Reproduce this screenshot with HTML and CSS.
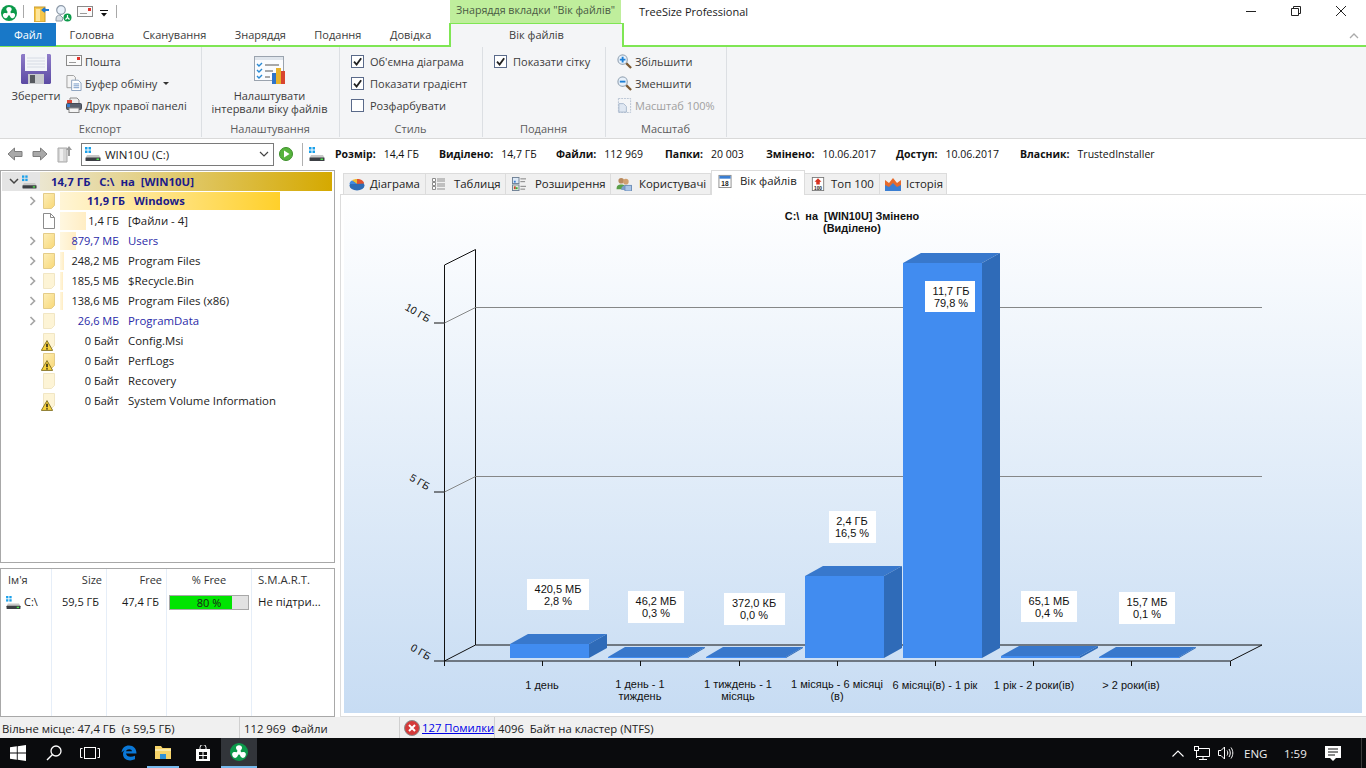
FILE: index.html
```html
<!DOCTYPE html>
<html lang="uk">
<head>
<meta charset="utf-8">
<title>TreeSize Professional</title>
<link rel="stylesheet" href="styles.css">
</head>
<body>
<svg class="defs" width="0" height="0" aria-hidden="true">
  <defs>
    <linearGradient id="gDisk" x1="0" y1="0" x2="0" y2="1"><stop offset="0" stop-color="#8f7cc9"/><stop offset="1" stop-color="#5b4aa3"/></linearGradient>
    <linearGradient id="gFold" x1="0" y1="0" x2="1" y2="1"><stop offset="0" stop-color="#fdeeb8"/><stop offset="1" stop-color="#f8d878"/></linearGradient>
    <symbol id="logo" viewBox="0 0 16 16"><circle cx="8" cy="8" r="8" fill="#0c9a4a"/><g fill="#fff"><circle cx="8" cy="8.500" r="1.900"/><path d="M8 9C6.800 6.800 5.300 5.600 5.300 4.200 5.300 2.800 6.500 2 8 2s2.700.8 2.700 2.200C10.700 5.600 9.200 6.800 8 9z"/><path d="M8 9C6.800 6.800 5.300 5.600 5.300 4.200 5.300 2.800 6.500 2 8 2s2.700.8 2.700 2.200C10.700 5.600 9.200 6.800 8 9z" transform="rotate(120 8 8.500)"/><path d="M8 9C6.800 6.800 5.300 5.600 5.300 4.200 5.300 2.800 6.500 2 8 2s2.700.8 2.700 2.200C10.700 5.600 9.200 6.800 8 9z" transform="rotate(240 8 8.500)"/></g></symbol>
    <symbol id="mail" viewBox="0 0 16 12"><rect x=".5" y=".5" width="15" height="10" fill="#fbfbfb" stroke="#8a8a8a"/><rect x="11" y="2" width="3" height="3" fill="#e0342c"/><path d="M3 7.500h7" stroke="#9a9a9a"/></symbol>
    <symbol id="clip" viewBox="0 0 16 17"><path d="M.5.500h7l2 2v11H.5z" fill="#f4f4f4" stroke="#9c9c9c"/><path d="M5.500 5.500h7l3 3v8h-10z" fill="#fff" stroke="#8aa0bd"/><path d="M7.500 9.500h6M7.500 11.500h6M7.500 13.500h6" stroke="#6f94c4"/></symbol>
    <symbol id="print" viewBox="0 0 16 16"><path d="M4 1h7l2 2v4H4z" fill="#eee" stroke="#8a8a8a"/><rect x=".5" y="6.500" width="15" height="6" rx="1" fill="#59616e" stroke="#454b55"/><rect x="3" y="11" width="10" height="4.500" fill="#f4f4f4" stroke="#888"/><rect x="1" y="3" width="5" height="3" fill="#d8483a"/><rect x="1" y="7" width="3" height="3" fill="#3a7ed2"/></symbol>
    <symbol id="check" viewBox="0 0 12 12"><path d="M2.200 6.200 5 9.300 10 2.400" fill="none" stroke="#222" stroke-width="2"/></symbol>
    <symbol id="zoomin" viewBox="0 0 16 16"><path d="M9.500 9.500 15 15" stroke="#7c5a33" stroke-width="2.400"/><circle cx="6" cy="6" r="5" fill="#e8f1fb" stroke="#9aa9b8" stroke-width="1.300"/><path d="M3 6h6M6 3v6" stroke="#1c7fd6" stroke-width="2"/></symbol>
    <symbol id="zoomout" viewBox="0 0 16 16"><path d="M9.500 9.500 15 15" stroke="#7c5a33" stroke-width="2.400"/><circle cx="6" cy="6" r="5" fill="#e8f1fb" stroke="#9aa9b8" stroke-width="1.300"/><path d="M3 6h6" stroke="#1c7fd6" stroke-width="2"/></symbol>
    <symbol id="zoom100" viewBox="0 0 14 16"><rect x=".5" y=".5" width="13" height="15" fill="none" stroke="#b6c2d2" stroke-dasharray="2 1"/><path d="M1 6h5l3 3v6H1z" fill="#dfe7f2" stroke="#a9b8cc"/></symbol>
    <symbol id="drive" viewBox="0 0 16 14"><g fill="#1aa0ea"><rect x="0" y="0" width="2.500" height="2.500"/><rect x="3.500" y="0" width="2.500" height="2.500"/><rect x="0" y="3.500" width="2.500" height="2.500"/><rect x="3.500" y="3.500" width="2.500" height="2.500"/></g><path d="M2 8h12l1.500 3H.5z" fill="#c8c8c8"/><rect x=".5" y="10.500" width="15" height="3.500" rx=".5" fill="#3c3f44"/><rect x="11.500" y="11.500" width="2.500" height="1.500" fill="#4ee04e"/></symbol>
    <symbol id="folder" viewBox="0 0 12 16"><path d="M.5.500h11v12l-3 3H.5z" fill="url(#gFold)" stroke="#e4cc88"/></symbol>
    <symbol id="folderpale" viewBox="0 0 12 16"><path d="M.5.500h11v12l-3 3H.5z" fill="#fdf4d6" stroke="#f1e6c4"/></symbol>
    <symbol id="file" viewBox="0 0 12 16"><path d="M.5.500h7l4 4v11H.5z" fill="#fff" stroke="#8c8c8c"/><path d="M7.500.5v4h4" fill="none" stroke="#8c8c8c"/></symbol>
    <symbol id="warn" viewBox="0 0 11 10"><path d="M5.500.5 10.700 9.500H.3z" fill="#f7d23e" stroke="#7a6a1e" stroke-width=".8"/><path d="M5.500 3.500v3.200M5.500 7.500v1.100" stroke="#111" stroke-width="1.300"/></symbol>
    <symbol id="chev-r" viewBox="0 0 8 10"><path d="M1.500 1 5.500 5 1.500 9" fill="none" stroke="#a6a6a6" stroke-width="1.700"/></symbol>
  </defs>
</svg>

<div class="app">
  <header class="titlebar">
    <div class="qat">
      <svg class="ic16 logo-ic"><use href="#logo"/></svg>
      <span class="qat-sep"></span>
      <svg class="ic-qat1" viewBox="0 0 16 16"><rect x="0" y="1" width="11" height="15" fill="#f5c64a" stroke="#c79a2c"/><path d="M2 3h4v12H2z" fill="#fde59a"/><path d="M15 4H9M11 2 8.500 4 11 6" fill="none" stroke="#1f78d1" stroke-width="1.800"/></svg>
      <svg class="ic-qat2" viewBox="0 0 17 17"><circle cx="6" cy="5" r="4.300" fill="#eaf2fb" stroke="#8d9aa8" stroke-width="1.200"/><path d="M1 14c0-3 2-4 4-4l3 3-1 3H1z" fill="#d8dde3" stroke="#8d9aa8"/><circle cx="12.500" cy="12.500" r="4" fill="#0c9a4a"/><path d="M12.500 10v2.500l-2 2M12.500 12.500l2 2" stroke="#fff" stroke-width="1.200" fill="none"/></svg>
      <svg class="ic-qat3"><use href="#mail"/></svg>
      <svg class="ic-qat4" viewBox="0 0 8 8"><path d="M0 .5h8" stroke="#111"/><path d="M1 3h6L4 6.500z" fill="#111"/></svg>
      <span class="qat-sep qat-sep-last"></span>
    </div>
    <div class="ctx-title">Знаряддя вкладки "Вік файлів"</div>
    <div class="app-title">TreeSize Professional</div>
    <div class="winctl">
      <svg viewBox="0 0 10 10" class="wc"><path d="M0 5.500h10" stroke="#222"/></svg>
      <svg viewBox="0 0 10 10" class="wc"><path d="M.5 2.500h7v7h-7zM2.500 2.500v-2h7v7h-2" fill="none" stroke="#222"/></svg>
      <svg viewBox="0 0 10 10" class="wc"><path d="M0 0l10 10M10 0 0 10" stroke="#222"/></svg>
    </div>
  </header>

  <nav class="tabsrow">
    <div class="tab-file">Файл</div>
    <div class="tab-list">
      <span>Головна</span><span>Сканування</span><span>Знаряддя</span><span>Подання</span><span>Довідка</span>
    </div>
    <div class="tab-active">Вік файлів</div>
    <svg class="collapse" viewBox="0 0 10 6"><path d="M1 5 5 1l4 4" fill="none" stroke="#aaa" stroke-width="1.300"/></svg>
  </nav>

  <section class="ribbon">
    <div class="group g1">
      <div class="gbody">
        <div class="bigbtn save">
          <svg class="disk" viewBox="0 0 30 30"><path d="M1 0h28l1 1v28l-1 1H1l-1-1V1z" fill="url(#gDisk)"/><rect x="4" y="0" width="22" height="17" fill="#f3f5f8"/><path d="M6 4h18M6 7h18M6 10h18M6 13h18" stroke="#d6dbe4"/><rect x="7" y="20" width="16" height="10" fill="#c7c9cc"/><rect x="9" y="21" width="5" height="8" fill="#55585e"/></svg>
          <span>Зберегти</span>
        </div>
        <div class="smallcol">
          <div class="sbtn"><svg class="sic"><use href="#mail"/></svg><span>Пошта</span></div>
          <div class="sbtn"><svg class="sic"><use href="#clip"/></svg><span>Буфер обміну</span><i class="caret"></i></div>
          <div class="sbtn"><svg class="sic"><use href="#print"/></svg><span>Друк правої панелі</span></div>
        </div>
      </div>
      <div class="glabel">Експорт</div>
    </div>
    <div class="group g2">
      <div class="gbody center">
        <div class="bigbtn cfg">
          <svg class="cfg-ic" viewBox="0 0 32 30"><rect x=".5" y=".5" width="29" height="24" fill="#fbfcfe" stroke="#9aa3ae"/><rect x="1" y="1" width="28" height="3" fill="#dfe5ec"/><path d="M3 8l2 2 3-3M3 14l2 2 3-3M3 20l2 2 3-3" fill="none" stroke="#2a8ad4" stroke-width="1.400"/><path d="M11 9h14M11 15h8M11 21h5" stroke="#555"/><rect x="18" y="17" width="4" height="11" fill="#2f74c9"/><rect x="22" y="12" width="5" height="16" fill="#e8b22a"/><rect x="27" y="15" width="4" height="13" fill="#d8452f"/></svg>
          <span>Налаштувати<br>інтервали віку файлів</span>
        </div>
      </div>
      <div class="glabel">Налаштування</div>
    </div>
    <div class="group g3">
      <div class="gbody col">
        <label class="cb"><span class="box"><svg class="tick"><use href="#check"/></svg></span>Об'ємна діаграма</label>
        <label class="cb"><span class="box"><svg class="tick"><use href="#check"/></svg></span>Показати градієнт</label>
        <label class="cb"><span class="box"></span>Розфарбувати</label>
      </div>
      <div class="glabel">Стиль</div>
    </div>
    <div class="group g4">
      <div class="gbody col">
        <label class="cb"><span class="box"><svg class="tick"><use href="#check"/></svg></span>Показати сітку</label>
      </div>
      <div class="glabel">Подання</div>
    </div>
    <div class="group g5">
      <div class="gbody col">
        <div class="zbtn"><svg class="zic"><use href="#zoomin"/></svg>Збільшити</div>
        <div class="zbtn"><svg class="zic"><use href="#zoomout"/></svg>Зменшити</div>
        <div class="zbtn off"><svg class="zic"><use href="#zoom100"/></svg>Масштаб 100%</div>
      </div>
      <div class="glabel">Масштаб</div>
    </div>
  </section>

  <section class="toolbar">
    <svg class="nav-ic" viewBox="0 0 16 14"><path d="M7.500 1 1 7l6.500 6V9.500H15v-5H7.500z" fill="#a9a9a9" stroke="#7d7d7d"/></svg>
    <svg class="nav-ic" viewBox="0 0 16 14"><path d="M8.500 1 15 7l-6.500 6V9.500H1v-5h7.500z" fill="#a9a9a9" stroke="#7d7d7d"/></svg>
    <svg class="up-ic" viewBox="0 0 16 18"><path d="M1 3h9v14H1z" fill="#d6d6d6" stroke="#aaa"/><path d="M3 4h3v12H3z" fill="#eee"/><path d="M12 1l3 4h-2v6h-2V5H9z" fill="#9c9c9c"/></svg>
    <div class="combo">
      <svg class="combo-drive"><use href="#drive"/></svg>
      <span class="combo-text">WIN10U (C:)</span>
      <svg class="combo-arrow" viewBox="0 0 10 6"><path d="M1 1l4 4 4-4" fill="none" stroke="#444" stroke-width="1.200"/></svg>
    </div>
    <svg class="go" viewBox="0 0 14 14"><circle cx="7" cy="7" r="6.500" fill="#56b33c" stroke="#3d8f2a"/><path d="M5 3.500 10.500 7 5 10.500z" fill="#fff"/></svg>
    <span class="tb-sep"></span>
    <svg class="tb-drive"><use href="#drive"/></svg>
    <dl class="stats">
      <div class="s1"><dt>Розмір:</dt><dd>14,4 ГБ</dd></div>
      <div class="s2"><dt>Виділено:</dt><dd>14,7 ГБ</dd></div>
      <div class="s3"><dt>Файли:</dt><dd>112 969</dd></div>
      <div class="s4"><dt>Папки:</dt><dd>20 003</dd></div>
      <div class="s5"><dt>Змінено:</dt><dd>10.06.2017</dd></div>
      <div class="s6"><dt>Доступ:</dt><dd>10.06.2017</dd></div>
      <div class="s7"><dt>Власник:</dt><dd>TrustedInstaller</dd></div>
    </dl>
  </section>

  <main class="main">
    <aside class="left">
      <div class="tree">
        <div class="root">
          <div class="root-head">
            <svg class="root-chev" viewBox="0 0 10 7"><path d="M1 1l4 4 4-4" fill="none" stroke="#444" stroke-width="1.500"/></svg>
            <svg class="root-drive"><use href="#drive"/></svg>
          </div>
          <div class="root-bar">14,7 ГБ&nbsp;&nbsp; C:\&nbsp; на&nbsp; [WIN10U]</div>
        </div>
        <div class="row strong"><svg class="chev"><use href="#chev-r"/></svg><span class="ficon"><svg class="fsvg"><use href="#folder"/></svg></span><span class="size"><i class="bar hot" style="width:220px"></i><b>11,9 ГБ</b></span><span class="name">Windows</span></div>
        <div class="row"><span class="chev-gap"></span><span class="ficon"><svg class="fsvg"><use href="#file"/></svg></span><span class="size"><i class="bar" style="width:26px"></i><b>1,4 ГБ</b></span><span class="name">[Файли - 4]</span></div>
        <div class="row blue"><svg class="chev"><use href="#chev-r"/></svg><span class="ficon"><svg class="fsvg"><use href="#folder"/></svg></span><span class="size"><i class="bar" style="width:16px"></i><b>879,7 МБ</b></span><span class="name">Users</span></div>
        <div class="row"><svg class="chev"><use href="#chev-r"/></svg><span class="ficon"><svg class="fsvg"><use href="#folder"/></svg></span><span class="size"><i class="bar" style="width:4px"></i><b>248,2 МБ</b></span><span class="name">Program Files</span></div>
        <div class="row"><svg class="chev"><use href="#chev-r"/></svg><span class="ficon"><svg class="fsvg"><use href="#folderpale"/></svg></span><span class="size"><i class="bar" style="width:3px"></i><b>185,5 МБ</b></span><span class="name">$Recycle.Bin</span></div>
        <div class="row"><svg class="chev"><use href="#chev-r"/></svg><span class="ficon"><svg class="fsvg"><use href="#folder"/></svg></span><span class="size"><i class="bar" style="width:3px"></i><b>138,6 МБ</b></span><span class="name">Program Files (x86)</span></div>
        <div class="row blue"><svg class="chev"><use href="#chev-r"/></svg><span class="ficon"><svg class="fsvg"><use href="#folderpale"/></svg></span><span class="size"><b>26,6 МБ</b></span><span class="name">ProgramData</span></div>
        <div class="row"><span class="chev-gap"></span><span class="ficon"><svg class="fsvg"><use href="#folderpale"/></svg><svg class="warn"><use href="#warn"/></svg></span><span class="size"><b>0 Байт</b></span><span class="name">Config.Msi</span></div>
        <div class="row"><span class="chev-gap"></span><span class="ficon"><svg class="fsvg"><use href="#folder"/></svg><svg class="warn"><use href="#warn"/></svg></span><span class="size"><b>0 Байт</b></span><span class="name">PerfLogs</span></div>
        <div class="row"><span class="chev-gap"></span><span class="ficon"><svg class="fsvg"><use href="#folderpale"/></svg></span><span class="size"><b>0 Байт</b></span><span class="name">Recovery</span></div>
        <div class="row"><span class="chev-gap"></span><span class="ficon"><svg class="fsvg"><use href="#folderpale"/></svg><svg class="warn"><use href="#warn"/></svg></span><span class="size"><b>0 Байт</b></span><span class="name">System Volume Information</span></div>
      </div>
      <div class="drives">
        <div class="dcol c-name"><div class="dh">Ім'я</div><div class="dc"><svg class="d-drive"><use href="#drive"/></svg>C:\</div></div>
        <div class="dcol c-size"><div class="dh">Size</div><div class="dc">59,5 ГБ</div></div>
        <div class="dcol c-free"><div class="dh">Free</div><div class="dc">47,4 ГБ</div></div>
        <div class="dcol c-pct"><div class="dh">% Free</div><div class="dc"><div class="prog"><i class="prog-fill" style="width:80%"></i><span>80 %</span></div></div></div>
        <div class="dcol c-smart"><div class="dh">S.M.A.R.T.</div><div class="dc">Не підтри...</div></div>
      </div>
    </aside>

    <section class="right">
      <div class="viewtabs">
        <div class="vt t1"><svg class="vi" viewBox="0 0 16 14"><ellipse cx="8" cy="8.500" rx="7.500" ry="5" fill="#2e6cb5"/><path d="M8 7V2c4 0 7 2 7 4.500z" fill="#e0522f"/><path d="M8 7V2C6 2 4 2.500 3 3.500z" fill="#eebc33"/><path d="M8 7H.5c0-1.500 1-3 2.500-3.500z" fill="#3f8ae0"/></svg>Діаграма</div>
        <div class="vt t2"><svg class="vi" viewBox="0 0 14 14"><path d="M.5 1.500h3v3h-3zM.5 5.500h3v3h-3zM.5 9.500h3v3h-3z" fill="#fff" stroke="#8c8c8c"/><path d="M5 2h8M5 4h8M5 7h8M5 9h8M5 12h8" stroke="#8f8f8f"/></svg>Таблиця</div>
        <div class="vt t3"><svg class="vi" viewBox="0 0 15 15"><rect x=".5" y=".5" width="7" height="6.500" fill="#dde9f6" stroke="#6d7f93"/><rect x="2" y="4" width="2" height="2" fill="#3a7ed2"/><rect x=".5" y="8.500" width="7" height="6" fill="#dfeedd" stroke="#6d7f93"/><rect x="2" y="10" width="2" height="3" fill="#c43"/><rect x="4" y="11" width="2" height="2" fill="#3a3"/><path d="M9 2h6M9 5h5M9 10h6M9 13h5" stroke="#7b7b7b"/></svg>Розширення</div>
        <div class="vt t4"><svg class="vi" viewBox="0 0 16 15"><circle cx="5" cy="4" r="3" fill="#b98a5e"/><path d="M0 13c0-4 2-5 5-5s5 1 5 5z" fill="#5b9f4a"/><circle cx="10" cy="5" r="3" fill="#d0a070"/><path d="M5 14c0-4 2-5 5-5s5 1 5 5z" fill="#7c9ecb"/><rect x="9" y="9" width="7" height="6" fill="#a9c4e6" stroke="#6c8db8"/></svg>Користувачі</div>
        <div class="vt active"><svg class="vi" viewBox="0 0 14 15"><rect x=".5" y="1.500" width="13" height="13" fill="#fff" stroke="#8c8c8c"/><rect x="1" y="2" width="12" height="3" fill="#3a7ed2"/><text x="7" y="12.500" class="calnum">18</text></svg>Вік файлів</div>
        <div class="vt t6"><svg class="vi" viewBox="0 0 14 16"><rect x=".5" y=".5" width="13" height="15" fill="#fff" stroke="#777"/><path d="M7 1.500l4 4H9v3H5v-3H3z" fill="#d8321f"/><text x="7" y="14.500" class="topnum">100</text></svg>Топ 100</div>
        <div class="vt t7"><svg class="vi" viewBox="0 0 16 14"><path d="M0 14V3l4 3 4-5 4 5 4-3v11z" fill="#e66a2a"/><path d="M0 14V8l4 2 4-4 4 4 4-2v6z" fill="#3a7ed2"/></svg>Історія</div>
      </div>
      <div class="chartframe">
        <svg class="chart" viewBox="344 197 1018 516" width="1018" height="516">
          <defs>
            <linearGradient id="gBg" x1="0" y1="0" x2="0" y2="1"><stop offset="0" stop-color="#ffffff"/><stop offset="1" stop-color="#c7dcf3"/></linearGradient>
          </defs>
          <rect x="344" y="197" width="1018" height="516" fill="url(#gBg)"/>
          <text class="ct-title" x="852" y="220">C:\  на  [WIN10U] Змінено</text>
          <text class="ct-title" x="852" y="232">(Виділено)</text>

          <g class="ax">
            <path d="M444.500 265V666M475.500 249.500V645M444.500 265 475.500 249.500"/>
            <path d="M434 661H1230.500L1262 645H475.500L444.500 661"/>
            <path d="M434 492H444.500M434 323H444.500"/>
            <path d="M542.500 661v5M640.500 661v5M739.500 661v5M837.500 661v5M935.500 661v5M1033.500 661v5M1131.500 661v5M1230.500 661v5"/>
          </g>
          <g class="grid">
            <path d="M444.500 323 475.500 307.500H1262M444.500 492 475.500 476.500H1262"/>
          </g>
          <text class="tick-l" transform="translate(416 316) rotate(30)">10 ГБ</text>
          <text class="tick-l" transform="translate(418 485) rotate(30)">5 ГБ</text>
          <text class="tick-l" transform="translate(419 655) rotate(30)">0 ГБ</text>

          <g>
            <polygon class="b-top" points="510,644 528,634 607,634 589,644"/><polygon class="b-side" points="589,644 607,634 607,648 589,658"/><rect class="b-front" x="510" y="644" width="79" height="14"/>
            <polygon class="b-top" points="608,657 625,647 705,647 688,657"/><polygon class="b-side" points="688,657 705,647 705,648 688,658"/><rect class="b-front" x="608" y="657" width="80" height="1"/>
            <polygon class="b-top" points="706,657 723,647 803,647 786,657"/><polygon class="b-side" points="786,657 803,647 803,648 786,658"/><rect class="b-front" x="706" y="657" width="80" height="1"/>
            <polygon class="b-top" points="805,576 823,566 902,566 884,576"/><polygon class="b-side" points="884,576 902,566 902,648 884,658"/><rect class="b-front" x="805" y="576" width="79" height="82"/>
            <polygon class="b-top" points="903,263 921,253 1000,253 982,263"/><polygon class="b-side" points="982,263 1000,253 1000,648 982,658"/><rect class="b-front" x="903" y="263" width="79" height="395"/>
            <polygon class="b-top" points="1001,656 1019,646 1098,646 1080,656"/><polygon class="b-side" points="1080,656 1098,646 1098,648 1080,658"/><rect class="b-front" x="1001" y="656" width="79" height="2"/>
            <polygon class="b-top" points="1099,657 1116,647 1196,647 1179,657"/><polygon class="b-side" points="1179,657 1196,647 1196,648 1179,658"/><rect class="b-front" x="1099" y="657" width="80" height="1"/>
          </g>

          <g class="lblbox">
            <rect x="527" y="579" width="62" height="31"/><rect x="628" y="591" width="56" height="32"/><rect x="724" y="593" width="61" height="32"/><rect x="829" y="511" width="47" height="32"/><rect x="925" y="281" width="50" height="31"/><rect x="1021" y="591" width="56" height="31"/><rect x="1119" y="592" width="56" height="32"/>
          </g>
          <g class="lbl">
            <text x="558" y="593">420,5 МБ</text><text x="558" y="605">2,8 %</text>
            <text x="656" y="605">46,2 МБ</text><text x="656" y="617">0,3 %</text>
            <text x="754" y="607">372,0 КБ</text><text x="754" y="619">0,0 %</text>
            <text x="852" y="525">2,4 ГБ</text><text x="852" y="537">16,5 %</text>
            <text x="951" y="295">11,7 ГБ</text><text x="951" y="307">79,8 %</text>
            <text x="1049" y="605">65,1 МБ</text><text x="1049" y="617">0,4 %</text>
            <text x="1147" y="606">15,7 МБ</text><text x="1147" y="618">0,1 %</text>
          </g>
          <g class="lbl">
            <text x="542" y="689">1 день</text>
            <text x="640" y="688">1 день - 1</text><text x="640" y="700">тиждень</text>
            <text x="738" y="688">1 тиждень - 1</text><text x="738" y="700">місяць</text>
            <text x="837" y="688">1 місяць - 6 місяці</text><text x="837" y="700">(в)</text>
            <text x="935" y="689">6 місяці(в) - 1 рік</text>
            <text x="1034" y="689">1 рік - 2 роки(ів)</text>
            <text x="1131" y="689">&gt; 2 роки(ів)</text>
          </g>
        </svg>
      </div>
    </section>
  </main>

  <footer class="status">
    <div class="st st1">Вільне місце: 47,4 ГБ&nbsp; (з 59,5 ГБ)</div>
    <div class="st st2">112 969&nbsp; Файли</div>
    <div class="st st3"><svg class="err" viewBox="0 0 16 16"><circle cx="8" cy="8" r="7.500" fill="#d43a3a" stroke="#8a8a8a"/><path d="M5 5l6 6M11 5l-6 6" stroke="#fff" stroke-width="2"/></svg><a class="errlink">127 Помилки</a></div>
    <div class="st st4">4096&nbsp; Байт на кластер (NTFS)</div>
  </footer>

  <div class="taskbar">
    <svg class="tk-win" viewBox="0 0 16 16"><path d="M0 2.300 6.800 1.300V7.500H0zM7.700 1.200 16 0V7.500H7.700zM0 8.400H6.800V14.700L0 13.700zM7.700 8.400H16V16L7.700 14.800z" fill="#fff"/></svg>
    <svg class="tk-search" viewBox="0 0 16 16"><circle cx="10" cy="6" r="5" fill="none" stroke="#fff" stroke-width="1.300"/><path d="M6.500 9.500 1 15" stroke="#fff" stroke-width="1.500"/></svg>
    <svg class="tk-view" viewBox="0 0 20 12"><rect x="4.500" y=".5" width="11" height="11" fill="none" stroke="#fff"/><path d="M2.500 1.500H.5v9h2M17.500 1.500h2v9h-2" fill="none" stroke="#fff"/></svg>
    <svg class="tk-edge" viewBox="0 0 16 16"><path d="M.5 7.500C1 3 4 .5 8 .5c4.500 0 7.500 3 7.500 8H5c.3 3 4.500 4.500 9 2.200v3.600c-5.500 2.600-12 .7-12-5.300 0-2.800 2-5 4.800-5.500C5 4 3 5.500.5 7.500zM5 6.300h6C11 3.600 5.500 3.500 5 6.300z" fill="#0a78d7"/></svg>
    <div class="tk-slot under"><svg class="tk-ex" viewBox="0 0 16 14"><path d="M0 1h6l1.500 2H16v11H0z" fill="#f6d469"/><rect x="0" y="4" width="16" height="2" fill="#fbe9a6"/><rect x="5" y="9" width="6" height="5" fill="#2f93d8"/></svg></div>
    <svg class="tk-store" viewBox="0 0 14 16"><path d="M4 4V2.500a3 3 0 0 1 6 0V4" fill="none" stroke="#fff"/><path d="M0 4h14v12H0z" fill="#fff"/><g fill="#111"><rect x="3" y="7" width="3.500" height="3"/><rect x="7.500" y="7" width="3.500" height="3"/><rect x="3" y="11" width="3.500" height="3"/><rect x="7.500" y="11" width="3.500" height="3"/></g></svg>
    <div class="tk-slot tk-active under"><svg class="tk-logo"><use href="#logo"/></svg></div>
    <div class="tray">
      <svg class="tr-up" viewBox="0 0 12 7"><path d="M.5 6.500 6 1l5.500 5.500" fill="none" stroke="#fff" stroke-width="1.100"/></svg>
      <svg class="tr-net" viewBox="0 0 16 14"><path d="M2.500 2.500h13v8h-13M9 10.500V13M5 13.500h8M2.500 5v7" fill="none" stroke="#fff"/><rect x=".5" y=".5" width="4" height="4" fill="#0b0c0e" stroke="#fff"/></svg>
      <svg class="tr-vol" viewBox="0 0 16 14"><path d="M.5 4.500h2.500L6.500 1v12L3 9.500H.5z" fill="none" stroke="#fff"/><path d="M9 4.500c1 1.500 1 3.500 0 5M11 3c1.700 2.500 1.700 5.500 0 8M13 1.500c2.400 3.500 2.400 7.500 0 11" fill="none" stroke="#fff"/></svg>
      <span class="tr-lang">ENG</span>
      <span class="tr-time">1:59</span>
      <svg class="tr-note" viewBox="0 0 16 15"><path d="M0 0h16v12h-5l-3 3-3-3H0z" fill="#fff"/><path d="M3 3h10M3 6h10M3 9h7" stroke="#111"/></svg>
      <span class="tr-show"></span>
    </div>
  </div>
</div>
</body>
</html>
```
FILE: styles.css
```css
* { box-sizing: border-box; }
html, body { margin: 0; padding: 0; width: 1366px; height: 768px; overflow: hidden; }
body { font-family: "Open Sans", "Noto Sans", sans-serif; font-size: 11px; color: #222; background: #fff; }
.defs { position: absolute; }
svg { display: block; flex: none; }
.app { display: flex; flex-direction: column; width: 1366px; height: 768px; }

/* title bar */
.titlebar { display: flex; height: 23px; flex: none; background: #fff; }
.qat { display: flex; align-items: center; width: 450px; padding-left: 1px; }
.ic16 { width: 16px; height: 16px; }
.logo-ic { margin-top: 3px; }
.qat-sep { width: 1px; height: 13px; background: #a8a8a8; margin: 0 10px 0 6px; }
.qat-sep-last { margin-left: 8px; }
.ic-qat1 { width: 16px; height: 16px; margin-top: 4px; }
.ic-qat2 { width: 17px; height: 17px; margin: 4px 0 0 5px; }
.ic-qat3 { width: 16px; height: 12px; margin: 0 0 0 5px; }
.ic-qat4 { width: 8px; height: 8px; margin: 4px 0 0 7px; }
.ctx-title { width: 171px; background: #bfee9c; color: #4a5a44; text-align: center; line-height: 21px; font-size: 10.7px; }
.app-title { margin-left: 18px; color: #1a1a1a; line-height: 24px; font-size: 11px; }
.winctl { margin-left: auto; display: flex; padding: 6px 20px 0 0; gap: 35px; }
.wc { width: 10px; height: 10px; }

/* tabs */
.tabsrow { display: flex; height: 24px; flex: none; border-bottom: 2px solid #7fe654; position: relative; }
.tab-file { width: 56px; height: 23px; background: #1878c8; color: #fff; text-align: center; line-height: 23px; margin-bottom: -1px; }
.tab-list { display: flex; gap: 28.5px; width: 393px; padding-left: 13.5px; line-height: 23px; color: #3c3c3c; }
.tab-active { width: 175px; height: 24px; background: #f4f5f7; border: 2px solid #7fe654; border-bottom: 0; border-top-width: 1px; text-align: center; line-height: 22px; color: #3c3c3c; position: relative; }
.collapse { width: 10px; height: 6px; position: absolute; right: 7px; top: 10px; }

/* ribbon */
.ribbon { display: flex; height: 92px; flex: none; background: #f4f5f7; border-bottom: 1px solid #d9d9d9; }
.group { display: flex; flex-direction: column; border-right: 1px solid #dcdfe3; color: #3c3c3c; margin-bottom: 1px; }
.g1 { width: 202px; } .g2 { width: 138px; } .g3 { width: 143px; } .g4 { width: 123px; } .g5 { width: 121px; }
.gbody { flex: 1; display: flex; }
.gbody.center { justify-content: center; padding-right: 2px; }
.gbody.col { flex-direction: column; padding-top: 3px; }
.glabel { height: 15px; text-align: center; line-height: 14px; color: #5c5c5c; padding-right: 1px; }
.bigbtn { display: flex; flex-direction: column; align-items: center; text-align: center; line-height: 13px; }
.save { width: 66px; padding: 7px 0 0 6px; }
.save span { margin-top: 5px; }
.disk { width: 30px; height: 30px; }
.cfg { padding-top: 9px; }
.cfg span { margin-top: 3px; }
.cfg-ic { width: 32px; height: 30px; }
.smallcol { display: flex; flex-direction: column; padding-top: 3px; }
.sbtn { display: flex; align-items: center; height: 22px; gap: 3px; }
.sic { width: 16px; height: 16px; }
.caret { width: 0; height: 0; border: 3px solid transparent; border-top: 3px solid #333; margin: 3px 0 0 3px; }
.cb { display: flex; align-items: center; height: 22px; }
.g3 .cb { padding-left: 11px; }
.g4 .cb { padding-left: 11px; }
.box { width: 13px; height: 13px; border: 1px solid #5a6a8a; background: #fff; margin-right: 6px; display: flex; align-items: center; justify-content: center; }
.tick { width: 11px; height: 11px; }
.zbtn { display: flex; align-items: center; height: 22px; padding-left: 11px; gap: 3px; }
.zbtn.off { color: #a0a0a0; }
.zic { width: 15px; height: 15px; }

/* toolbar */
.toolbar { display: flex; align-items: center; height: 30px; flex: none; padding-left: 7px; background: #fff; }
.nav-ic { width: 16px; height: 14px; margin-right: 9px; }
.up-ic { width: 16px; height: 18px; margin-right: 8px; }
.combo { width: 193px; height: 23px; border: 1px solid #7a7a7a; display: flex; align-items: center; padding-left: 3px; background: #fff; }
.combo-drive { width: 16px; height: 14px; }
.combo-text { margin-left: 4px; font-size: 11.5px; color: #1a1a1a; }
.combo-arrow { width: 10px; height: 6px; margin-left: auto; margin-right: 4px; }
.go { width: 14px; height: 14px; margin-left: 5px; }
.tb-sep { width: 1px; height: 23px; background: #b0b0b0; margin: 0 6px 0 9px; }
.tb-drive { width: 16px; height: 14px; margin-right: 10px; }
.stats { display: flex; margin: 0; font-size: 10.5px; color: #111; }
.stats div { display: flex; gap: 8px; }
.stats dt { font-weight: 700; }
.stats dd { margin: 0; }
.s1 { width: 104px; } .s2 { width: 117px; } .s3 { width: 109px; } .s4 { width: 101px; } .s5 { width: 130px; } .s6 { width: 124px; }

/* main */
.main { display: flex; flex: 1; min-height: 0; gap: 5px; background: #fff; }
.left { width: 335px; display: flex; flex-direction: column; gap: 5px; padding-top: 1px; }
.tree { height: 393px; border: 1px solid #a8a8a8; overflow: hidden; }
.root { display: flex; height: 19px; margin: 1px 2px 0 1px; }
.root-head { width: 38px; background: #e4e4e4; display: flex; align-items: center; padding-left: 7px; gap: 3px; }
.root-chev { width: 10px; height: 7px; }
.root-drive { width: 15px; height: 14px; }
.root-bar { flex: 1; background: linear-gradient(90deg, #ebe6d0, #d5a900); color: #1b1b8a; font-weight: 700; padding-left: 11px; line-height: 19px; font-size: 11.4px; }
.row { display: flex; align-items: center; height: 20px; padding-left: 28px; position: relative; }
.chev { width: 8px; height: 10px; margin-right: 6px; }
.chev-gap { width: 8px; margin-right: 6px; }
.ficon { width: 12px; height: 16px; margin-right: 5px; position: relative; }
.fsvg { width: 12px; height: 16px; }
.warn { width: 12px; height: 11px; position: absolute; left: -2px; bottom: -2px; }
.size { width: 60px; text-align: right; position: relative; padding-right: 1px; line-height: 20px; height: 20px; }
.size b { font-weight: 400; position: relative; }
.bar { position: absolute; left: 0; top: 1px; bottom: 1px; background: linear-gradient(90deg, #fff7e0, #ffedc4); }
.bar.hot { background: linear-gradient(90deg, #fff5d6, #ffd02a); }
.name { margin: -1px 0 0 8px; position: relative; font-size: 11.4px; }
.blue .size, .blue .name { color: #2a2aa8; }
.strong .size { color: #1b1b8a; width: 66px; }
.strong .size b { font-weight: 700; }
.strong .name { color: #1b1b8a; font-weight: 700; font-size: 11.2px; }
.drives { height: 149px; border: 1px solid #a8a8a8; display: flex; }
.dcol { border-right: 1px solid #e6eef8; flex: none; }
.dh { height: 23px; line-height: 21px; padding: 0 4px; color: #333; }
.dc { height: 20px; line-height: 20px; display: flex; align-items: center; padding: 0 4px; color: #1a1a1a; }
.c-name { width: 51px; } .c-name .dh { padding-left: 7px; } .c-name .dc { padding-left: 5px; gap: 3px; }
.c-size { width: 55px; text-align: right; } .c-size .dc { justify-content: flex-end; padding-right: 7px; }
.c-free { width: 60px; text-align: right; } .c-free .dc { justify-content: flex-end; padding-right: 7px; }
.c-pct { width: 85px; text-align: center; } .c-pct .dc { padding: 0 2px; }
.c-smart { width: 80px; border-right: 0; } .c-smart .dh, .c-smart .dc { padding-left: 6px; font-size: 11.4px; }
.d-drive { width: 15px; height: 13px; }
.prog { width: 81px; height: 15px; border: 1px solid #a8a8a8; background: #e2e2e2; position: relative; text-align: center; line-height: 13px; }
.prog span { position: relative; }
.prog-fill { position: absolute; left: 0; top: 0; bottom: 0; background: #00e400; }

/* right */
.right { flex: 1; display: flex; flex-direction: column; min-width: 0; }
.viewtabs { display: flex; align-items: flex-end; height: 25px; flex: none; padding-left: 3px; position: relative; z-index: 1; font-size: 11.4px; }
.vt { height: 21px; display: flex; align-items: center; gap: 5px; padding: 0 0 1px 5px; background: #f0f0f0; border: 1px solid #dcdcdc; border-bottom: 0; border-left: 0; color: #222; }
.vt:first-child { border-left: 1px solid #dcdcdc; }
.vt.t1 { width: 83px; } .vt.t2 { width: 80px; gap: 7px; } .vt.t3 { width: 105px; gap: 8px; } .vt.t4 { width: 100px; gap: 7px; }
.vt.active { width: 94px; height: 25px; background: #fff; margin-bottom: -1px; border-left: 1px solid #dcdcdc; padding-bottom: 5px; gap: 7px; }
.vt.t6 { width: 75px; } .vt.t7 { width: 67px; }
.vi { width: 16px; height: 14px; }
.calnum { font: 700 7px "Liberation Sans", sans-serif; text-anchor: middle; fill: #222; }
.topnum { font: 700 5.500px "Liberation Sans", sans-serif; text-anchor: middle; fill: #222; }
.chartframe { flex: 1; border: 1px solid #dcdcdc; border-right: 0; padding: 2px 4px 2px 3px; background: #fff; min-height: 0; }
.chart text { font-family: "Liberation Sans", Arial, sans-serif; }
.ct-title { font-size: 10.9px; font-weight: 700; text-anchor: middle; fill: #111; white-space: pre; }
.ax path { fill: none; stroke: #111; stroke-width: 1; }
.grid path { fill: none; stroke: #858787; stroke-width: 1; }
.tick-l { font-size: 10.500px; fill: #111; text-anchor: middle; }
.b-front { fill: #418cf0; }
.b-top { fill: #3878cc; }
.b-side { fill: #2f6bb8; }
.lblbox rect { fill: #fff; }
.lbl text { font-size: 11px; text-anchor: middle; fill: #111; }

/* status */
.status { display: flex; height: 21px; flex: none; background: #f0f0f0; line-height: 23px; color: #222; font-size: 11.3px; }
.st { border-right: 1px solid #d0d0d0; padding-left: 2px; white-space: nowrap; overflow: hidden; }
.st1 { width: 240px; }
.st2 { width: 160px; padding-left: 4px; }
.st3 { width: 95px; display: flex; align-items: center; padding-left: 4px; gap: 2px; }
.st4 { border-right: 0; padding-left: 3px; }
.err { width: 16px; height: 16px; }
.errlink { color: #0000e8; text-decoration: underline; }

/* taskbar */
.taskbar { display: flex; align-items: center; height: 30px; flex: none; background: #0a0b0d; padding-left: 10px; color: #fff; }
.tk-win { width: 16px; height: 16px; }
.tk-search { width: 16px; height: 16px; margin-left: 20px; }
.tk-view { width: 20px; height: 12px; margin-left: 18px; }
.tk-edge { width: 16px; height: 16px; margin-left: 21px; }
.tk-slot { height: 30px; display: flex; align-items: center; justify-content: center; }
.under { border-bottom: 2px solid #76b9ed; }
.tk-slot:not(.tk-active) { width: 32px; margin-left: 10px; }
.tk-ex { width: 16px; height: 14px; }
.tk-store { width: 14px; height: 16px; margin-left: 17px; }
.tk-active { width: 36px; margin-left: 11px; background: #32353a; }
.tk-logo { width: 18px; height: 18px; }
.tray { margin-left: auto; display: flex; align-items: center; height: 30px; }
.tr-up { width: 12px; height: 7px; }
.tr-net { width: 16px; height: 14px; margin-left: 10px; }
.tr-vol { width: 16px; height: 14px; margin-left: 8px; }
.tr-lang { margin-left: 10px; width: 23px; font-size: 11.500px; color: #eee; }
.tr-time { margin-left: 17px; width: 24px; font-size: 11.500px; color: #eee; }
.tr-note { width: 16px; height: 15px; margin-left: 17px; }
.tr-show { width: 1px; height: 30px; background: #3a3a3a; margin-left: 20px; margin-right: 4px; }
```
